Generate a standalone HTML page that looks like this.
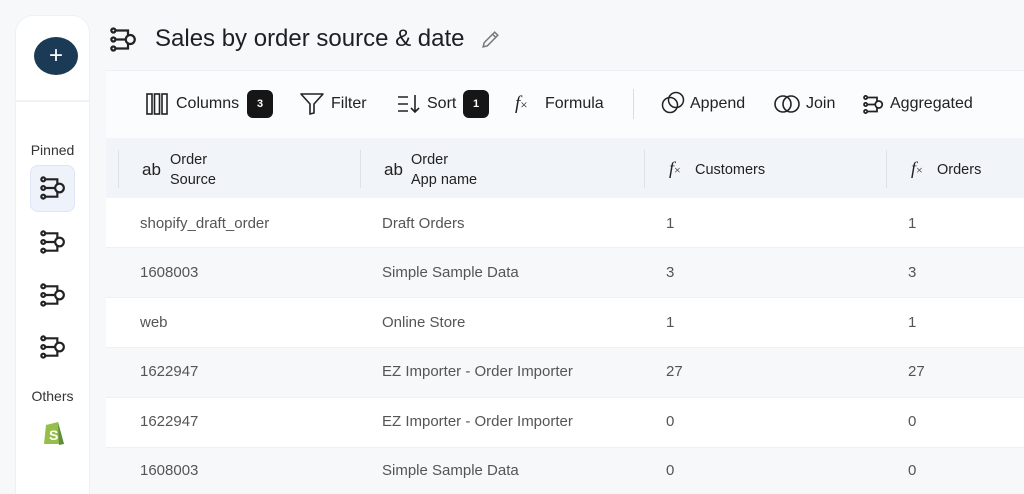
<!DOCTYPE html>
<html><head><meta charset="utf-8"><style>
*{margin:0;padding:0;box-sizing:border-box}
html,body{width:1024px;height:494px;overflow:hidden}
body{background:#f6f8fa;font-family:"Liberation Sans",sans-serif;color:#1d1f24;position:relative}
.side{position:absolute;left:15px;top:15px;width:75px;height:500px;background:#fff;border-radius:18px;border:1px solid #eef1f4}
.plus{position:absolute;left:34px;top:37px;width:44px;height:38px;border-radius:50%;background:#1b3a55;color:#fff;font-size:24px;text-align:center;line-height:37px}
.sep{position:absolute;left:15px;top:100px;width:75px;height:2px;background:#f0f2f5}
.lbl{position:absolute;font-size:14px;color:#333;width:75px;left:15px;text-align:center}
.sel{position:absolute;left:30px;top:165px;width:45px;height:47px;border-radius:8px;background:#eef3fb;border:1px solid #dce6f5}
.ic{position:absolute}
.main{position:absolute;left:106px;top:70px;width:918px;height:430px;background:#fff;border-left:1px solid #eceff3}
.tb{position:absolute;left:106px;top:70px;width:918px;height:68px;background:#fbfcfd;border-top:1px solid #eef0f3}
.t{position:absolute;font-size:16px;color:#222;white-space:nowrap}
.badge{position:absolute;background:#161616;color:#fff;font-size:11px;font-weight:bold;border-radius:6px;width:26px;height:28px;text-align:center;line-height:28px}
.hdr{position:absolute;left:106px;top:138px;width:918px;height:60px;background:#f1f4f8}
.row{position:absolute;left:106px;width:918px;height:50px;border-bottom:1px solid #eef0f3}
.c{position:absolute;font-size:15px;color:#555;white-space:nowrap}
.h{position:absolute;font-size:14.5px;color:#222;line-height:20px}
.vd{position:absolute;top:150px;width:1px;height:38px;background:#dde2ea}
</style></head><body>
<div class="side"></div>
<div class="plus">+</div>
<div class="sep"></div>
<div class="lbl" style="top:142px">Pinned</div>
<div class="sel"></div>
<svg width="0" height="0" style="position:absolute"><defs><g id="agg" fill="none" stroke="#222" stroke-width="2"><circle cx="3" cy="4" r="1.8"/><circle cx="3" cy="12" r="1.8"/><circle cx="3" cy="20" r="1.8"/><circle cx="18" cy="12" r="4"/><path d="M5 4H16V8.5M5 12H14M5 20H16V15.5"/></g></defs></svg>
<svg class="ic" style="left:40px;top:175px" width="26" height="26" viewBox="0 0 24 24"><use href="#agg"/></svg>
<svg class="ic" style="left:40px;top:229px" width="26" height="26" viewBox="0 0 24 24"><use href="#agg"/></svg>
<svg class="ic" style="left:40px;top:282px" width="26" height="26" viewBox="0 0 24 24"><use href="#agg"/></svg>
<svg class="ic" style="left:40px;top:334px" width="26" height="26" viewBox="0 0 24 24"><use href="#agg"/></svg>
<div class="lbl" style="top:388px">Others</div>
<svg class="ic" style="left:42px;top:418px" width="24" height="28" viewBox="0 0 24 28"><path d="M4 7L16 4L22 26L2 26Z" fill="#95bf47"/><path d="M16 4L22 26L17 27Z" fill="#5e8e3e"/><text x="7" y="22" font-size="14" font-weight="bold" fill="#fff" font-family="Liberation Sans">S</text></svg>

<svg class="ic" style="left:110px;top:26px" width="27" height="27" viewBox="0 0 24 24"><use href="#agg"/></svg>
<div class="t" style="left:155px;top:25px;font-size:24px;color:#1d1f24">Sales by order source &amp; date</div>
<svg class="ic" style="left:480px;top:29px" width="21" height="21" viewBox="0 0 20 20"><path d="M3 17L4 13L14 3L17 6L7 16Z M12 5L15 8" fill="none" stroke="#777" stroke-width="1.4"/></svg>

<div class="main"></div>
<div class="tb"></div>
<svg class="ic" style="left:146px;top:93px" width="22" height="22" viewBox="0 0 22 22"><g fill="none" stroke="#222" stroke-width="1.6"><rect x="1" y="1" width="5" height="20"/><rect x="8.5" y="1" width="5" height="20"/><rect x="16" y="1" width="5" height="20"/></g></svg>
<div class="t" style="left:176px;top:95px">Columns</div>
<div class="badge" style="left:247px;top:90px">3</div>
<svg class="ic" style="left:300px;top:93px" width="24" height="22" viewBox="0 0 24 22"><path d="M1 1H23L14 11V20L10 21V11Z" fill="none" stroke="#222" stroke-width="1.6" stroke-linejoin="round"/></svg>
<div class="t" style="left:331px;top:95px">Filter</div>
<svg class="ic" style="left:397px;top:94px" width="24" height="20" viewBox="0 0 24 20"><g stroke="#222" stroke-width="1.6" fill="none"><path d="M1 3H11M1 10H11M1 17H11M18 1V18M14 14L18 18L22 14"/></g></svg>
<div class="t" style="left:427px;top:95px">Sort</div>
<div class="badge" style="left:463px;top:90px">1</div>
<div class="t" style="left:515px;top:93px;font-family:'Liberation Serif',serif;font-style:italic;font-size:19px">f<span style="font-size:13px;font-style:normal">×</span></div>
<div class="t" style="left:545px;top:95px">Formula</div>
<div style="position:absolute;left:633px;top:89px;width:1px;height:30px;background:#d8dce2"></div>
<svg class="ic" style="left:661px;top:91px" width="24" height="24" viewBox="0 0 24 24"><g fill="none" stroke="#222" stroke-width="1.5"><circle cx="9" cy="14" r="7.5"/><circle cx="15" cy="9" r="7.5"/></g></svg>
<div class="t" style="left:690px;top:95px">Append</div>
<svg class="ic" style="left:773px;top:94px" width="28" height="20" viewBox="0 0 28 20"><g fill="none" stroke="#222" stroke-width="1.6"><circle cx="10" cy="10" r="8"/><circle cx="18" cy="10" r="8"/></g></svg>
<div class="t" style="left:806px;top:95px">Join</div>
<svg class="ic" style="left:863px;top:94px" width="21" height="21" viewBox="0 0 24 24"><use href="#agg"/></svg>
<div class="t" style="left:890px;top:95px">Aggregated</div>

<div class="hdr"></div>
<div class="vd" style="left:118px"></div><div class="vd" style="left:360px"></div><div class="vd" style="left:644px"></div><div class="vd" style="left:886px"></div>
<div class="t" style="left:142px;top:160px;font-size:17px">ab</div>
<div class="h" style="left:170px;top:150px">Order<br>Source</div>
<div class="t" style="left:384px;top:160px;font-size:17px">ab</div>
<div class="h" style="left:411px;top:150px">Order<br>App name</div>
<div class="t" style="left:669px;top:158px;font-family:'Liberation Serif',serif;font-style:italic;font-size:18px">f<span style="font-size:12px;font-style:normal">×</span></div>
<div class="h" style="left:695px;top:160px">Customers</div>
<div class="t" style="left:911px;top:158px;font-family:'Liberation Serif',serif;font-style:italic;font-size:18px">f<span style="font-size:12px;font-style:normal">×</span></div>
<div class="h" style="left:937px;top:160px">Orders</div>

<div class="row" style="top:198px;background:#fff"></div>
<div class="row" style="top:248px;background:#f7f8fa"></div>
<div class="row" style="top:298px;background:#fff"></div>
<div class="row" style="top:348px;background:#f7f8fa"></div>
<div class="row" style="top:398px;background:#fff"></div>
<div class="row" style="top:448px;background:#f7f8fa"></div>

<div class="c" style="left:140px;top:215px">shopify_draft_order</div><div class="c" style="left:382px;top:215px">Draft Orders</div><div class="c" style="left:666px;top:215px">1</div><div class="c" style="left:908px;top:215px">1</div>
<div class="c" style="left:140px;top:264px">1608003</div><div class="c" style="left:382px;top:264px">Simple Sample Data</div><div class="c" style="left:666px;top:264px">3</div><div class="c" style="left:908px;top:264px">3</div>
<div class="c" style="left:140px;top:314px">web</div><div class="c" style="left:382px;top:314px">Online Store</div><div class="c" style="left:666px;top:314px">1</div><div class="c" style="left:908px;top:314px">1</div>
<div class="c" style="left:140px;top:363px">1622947</div><div class="c" style="left:382px;top:363px">EZ Importer - Order Importer</div><div class="c" style="left:666px;top:363px">27</div><div class="c" style="left:908px;top:363px">27</div>
<div class="c" style="left:140px;top:413px">1622947</div><div class="c" style="left:382px;top:413px">EZ Importer - Order Importer</div><div class="c" style="left:666px;top:413px">0</div><div class="c" style="left:908px;top:413px">0</div>
<div class="c" style="left:140px;top:462px">1608003</div><div class="c" style="left:382px;top:462px">Simple Sample Data</div><div class="c" style="left:666px;top:462px">0</div><div class="c" style="left:908px;top:462px">0</div>
</body></html>
